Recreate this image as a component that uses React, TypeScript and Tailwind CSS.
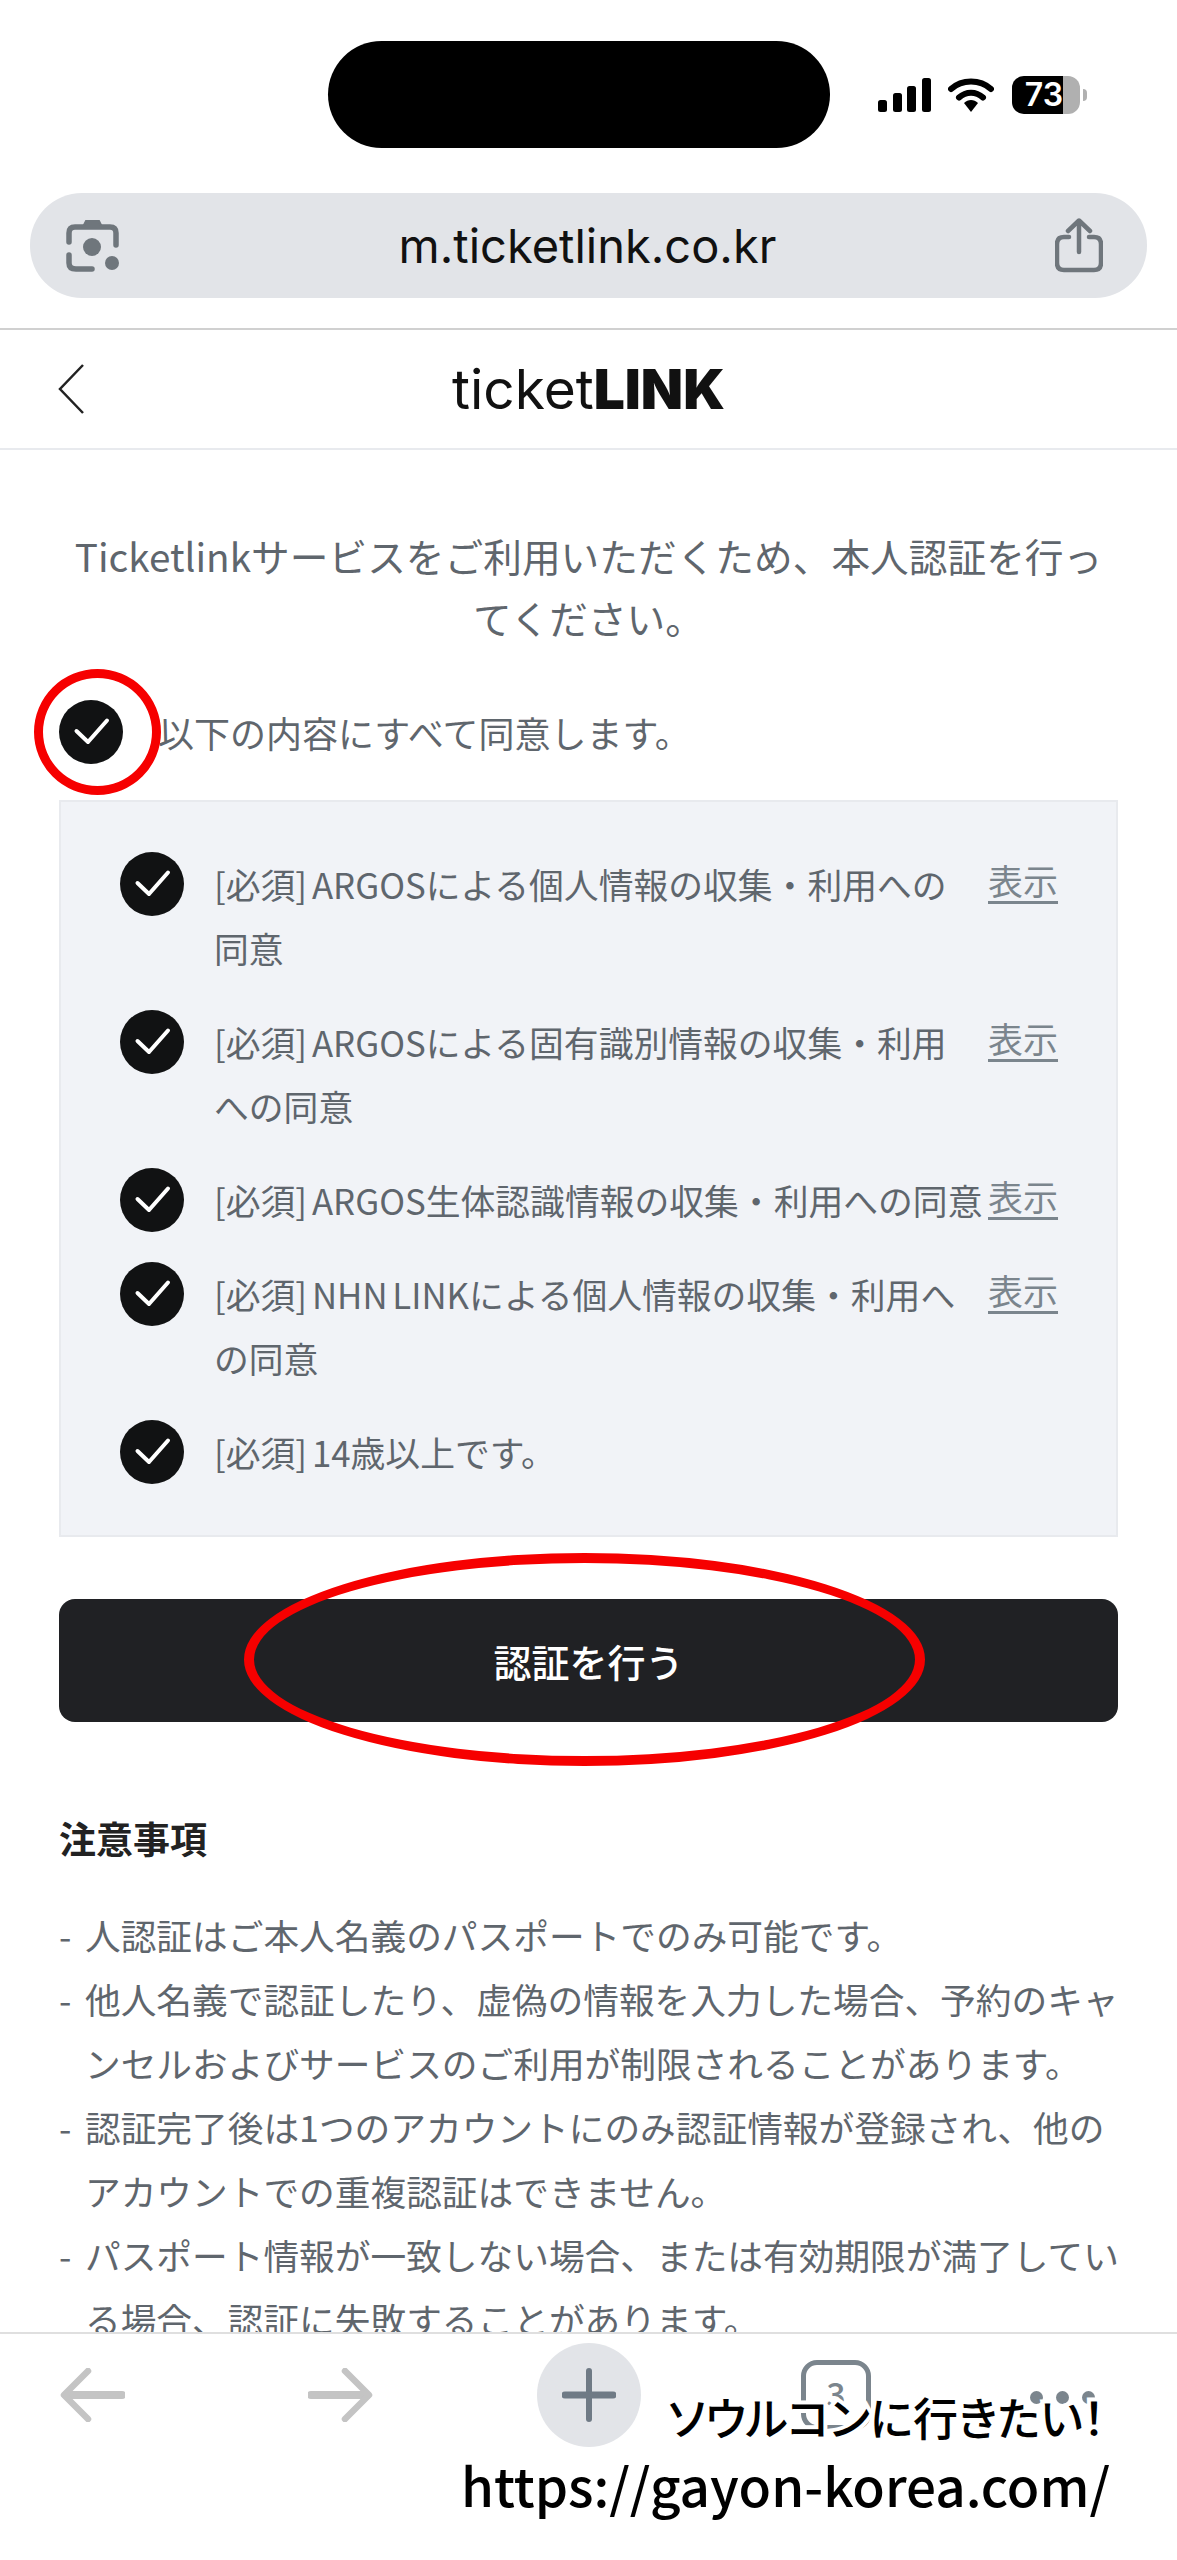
const cjk = "font-['Noto_Sans_CJK_JP','Noto_Sans',sans-serif]"

// line breaks are fixed to match the captured page
const agreements = [
    '[必須] ARGOSによる個人情報の収集・利用への\n同意',
    '[必須] ARGOSによる固有識別情報の収集・利用\nへの同意',
    '[必須] ARGOS生体認識情報の収集・利用への同意',
    '[必須] NHN LINKによる個人情報の収集・利用へ\nの同意',
    '[必須] 14歳以上です。',
]

const notes = [
    '人認証はご本人名義のパスポートでのみ可能です。',
    '他人名義で認証したり、虚偽の情報を入力した場合、予約のキャ\nンセルおよびサービスのご利用が制限されることがあります。',
    '認証完了後は1つのアカウントにのみ認証情報が登録され、他の\nアカウントでの重複認証はできません。',
    'パスポート情報が一致しない場合、または有効期限が満了してい\nる場合、認証に失敗することがあります。',
]

function CheckCircle() {
    return (
        <svg width="64" height="64" viewBox="0 0 64 64" className="shrink-0">
            <circle cx="32" cy="32" r="32" fill="#111213" />
            <path d="M17.5 31 L29 42 L48 20.5" fill="none" stroke="#fff" strokeWidth="4" strokeLinecap="round" strokeLinejoin="round" />
        </svg>
    )
}

function StatusIcons() {
    return (
        <div className="flex items-center ml-[48px]">
            <svg width="53" height="34" viewBox="0 0 53 34" fill="#000">
                <rect x="0" y="22" width="9" height="12" rx="2.5" />
                <rect x="15" y="15" width="9" height="19" rx="2.5" />
                <rect x="29" y="8" width="9" height="26" rx="2.5" />
                <rect x="44" y="0" width="9" height="34" rx="2.5" />
            </svg>
            <svg width="46" height="34" viewBox="0 0 46 34" className="ml-[17px]">
                <path d="M3 11 C14 1 32 1 43 11" fill="none" stroke="#000" strokeWidth="6" strokeLinecap="round" />
                <path d="M11 19.5 C18 13 28 13 35 19.5" fill="none" stroke="#000" strokeWidth="6" strokeLinecap="round" />
                <path d="M16 25 C20 21 26 21 30 25 L23 34 Z" fill="#000" />
            </svg>
            <div className="flex items-center ml-[18px]">
                <div className="flex w-[68px] h-[38px] rounded-[12px] overflow-hidden bg-[#b0b0b0]">
                    <div className="w-[51px] bg-black text-white text-[32px] leading-[38px] font-semibold text-right font-['Inter',sans-serif]">73</div>
                </div>
                <div className="w-[4px] h-[12px] ml-[3px] rounded-r-[4px] bg-[#b0b0b0]" />
            </div>
        </div>
    )
}

function LensIcon() {
    return (
        <svg width="54" height="54" viewBox="0 0 54 54" fill="none" stroke="#6f767c" strokeWidth="5.5" strokeLinecap="round">
            <path d="M3 23 V14 Q3 8 9 8 H44 Q50 8 50 14 V26" />
            <path d="M3 36 V44 Q3 50 10 50 H26" />
            <path d="M17 8 L20 2 H33 L36 8 Z" fill="#6f767c" strokeWidth="2" />
            <circle cx="26" cy="28" r="9" fill="#6f767c" stroke="none" />
            <circle cx="46" cy="44" r="7" fill="#6f767c" stroke="none" />
        </svg>
    )
}

function ShareIcon() {
    return (
        <svg width="48" height="55" viewBox="0 0 48 55" fill="none" stroke="#6f767c" strokeWidth="4.5" strokeLinecap="round" strokeLinejoin="round">
            <path d="M14 19 H9 Q2 19 2 26 V45 Q2 52 9 52 H39 Q46 52 46 45 V26 Q46 19 39 19 H34" />
            <path d="M24 34 V3 M13 13 L24 2.5 L35 13" />
        </svg>
    )
}

function BottomBar() {
    return (
        <div className="h-[228px] shrink-0 border-t-2 border-[#dfdfdf] bg-white">
            <div className="flex items-center h-[122px] pl-[60px]">
                <svg width="65" height="54" viewBox="0 0 65 54" fill="none" stroke="#c4c4c4" strokeLinecap="round" strokeLinejoin="round">
                    <path d="M62 27 H6" strokeWidth="8" />
                    <path d="M28 3 L4 27 L28 51" strokeWidth="6.5" />
                </svg>
                <svg width="65" height="54" viewBox="0 0 65 54" fill="none" stroke="#c4c4c4" strokeLinecap="round" strokeLinejoin="round" className="ml-[183px]">
                    <path d="M3 27 H59" strokeWidth="8" />
                    <path d="M37 3 L61 27 L37 51" strokeWidth="6.5" />
                </svg>
                <div className="flex items-center justify-center w-[104px] h-[104px] ml-[164px] rounded-full bg-[#e2e4e8]">
                    <svg width="54" height="54" viewBox="0 0 54 54" stroke="#6f7a85" strokeLinecap="round">
                        <path d="M27 3 V51" strokeWidth="6" />
                        <path d="M3 27 H51" strokeWidth="7" />
                    </svg>
                </div>
                <div className={`flex items-center justify-center w-[70px] h-[70px] ml-[160px] pb-[4px] rounded-[16px] border-[5px] border-[#7b858d] text-[34px] leading-none font-medium text-[#7b858d] ${cjk}`}>3</div>
                <div className="flex gap-[13px] ml-[159px] mt-[4px]">
                    <div className="w-[13px] h-[13px] rounded-full bg-[#7b858d]" />
                    <div className="w-[13px] h-[13px] rounded-full bg-[#7b858d]" />
                    <div className="w-[13px] h-[13px] rounded-full bg-[#7b858d]" />
                </div>
            </div>
        </div>
    )
}

export default function App() {
    return (
        <div className={`relative flex flex-col h-[2560px] overflow-hidden bg-white text-[#5f666d] ${cjk}`}>
            <div className="flex items-center h-[107px] mt-[41px] pl-[328px] shrink-0">
                <div className="w-[502px] h-[107px] rounded-[54px] bg-black" />
                <StatusIcons />
            </div>

            <div className="flex items-center justify-between h-[105px] mt-[45px] mx-[30px] pl-[36px] pr-[44px] rounded-[52px] bg-[#e2e4e8] shrink-0">
                <LensIcon />
                <span className="text-[47px] leading-none text-[#111] font-['Inter',sans-serif]">m.ticketlink.co.kr</span>
                <ShareIcon />
            </div>

            <header className="grid grid-cols-[1fr_auto_1fr] items-center h-[122px] mt-[30px] pl-[58px] border-t-2 border-b-2 border-t-[#d0d0d0] border-b-[#e8eaee] shrink-0">
                <svg width="26" height="50" viewBox="0 0 26 50" fill="none" stroke="#222" strokeWidth="2.5">
                    <path d="M25 1 L2 25 L25 49" />
                </svg>
                <div className="text-[55px] leading-none text-[#111] font-['Inter',sans-serif] -ml-[58px]">
                    ticket<span className="font-black">LINK</span>
                </div>
                <div />
            </header>

            <main className="flex-1 min-h-0 overflow-hidden px-[59px] pt-[74px]">
                <p className="text-[38.7px] leading-[62px] text-center whitespace-pre-line -mx-[20px]">{'Ticketlinkサービスをご利用いただくため、本人認証を行っ\nてください。'}</p>

                <div className="flex items-center gap-[35px] mt-[52px]">
                    <CheckCircle />
                    <span className="text-[36px] leading-[64px]">以下の内容にすべて同意します。</span>
                </div>

                <div className="flex flex-col gap-[30px] mt-[36px] pt-[50px] pb-[51px] pl-[59px] bg-[#f1f3f7] border-2 border-[#e8eaee]">
                    {agreements.map((text, i) => (
                        <div key={i} className="flex items-start">
                            <CheckCircle />
                            <p className="w-[766px] ml-[30px] text-[34.8px] leading-[64px] whitespace-pre [word-spacing:-3px]">{text}</p>
                            {i < 4 && <a className="ml-[8px] text-[35px] leading-[56px] text-[#7b858d] underline underline-offset-[6px]">表示</a>}
                        </div>
                    ))}
                </div>

                <button className="w-full h-[123px] mt-[62px] rounded-[16px] bg-[#202124] text-white text-[38px] font-medium">認証を行う</button>

                <h2 className="mt-[84px] text-[37px] leading-[64px] font-bold text-[#222]">注意事項</h2>
                <ul className="mt-[33px] -mr-[10px]">
                    {notes.map((note, i) => (
                        <li key={i} className="flex text-[35.7px] leading-[64px]">
                            <span className="w-[26px] shrink-0">-</span>
                            <span className="whitespace-pre-line">{note}</span>
                        </li>
                    ))}
                </ul>
            </main>

            <BottomBar />

            {/* red marks and caption drawn over the screenshot */}
            <div className="absolute left-[34px] top-[669px] w-[127px] h-[126px] rounded-[50%] border-[9px] border-[#f60000]" />
            <div className="absolute left-[244px] top-[1553px] w-[681px] h-[213px] rounded-[50%] border-[10px] border-[#f60000]" />
            <div className="absolute left-[668px] top-[2385px] text-[45px] leading-[64px] font-medium text-black whitespace-nowrap [font-feature-settings:'palt'] [-webkit-text-stroke:8px_white] [paint-order:stroke_fill]">ソウルコンに行きたい！</div>
            <div className="absolute left-[461px] top-[2446px] text-[53px] leading-[76px] font-medium text-black whitespace-nowrap [-webkit-text-stroke:8px_white] [paint-order:stroke_fill]">https://gayon-korea.com/</div>
        </div>
    )
}
